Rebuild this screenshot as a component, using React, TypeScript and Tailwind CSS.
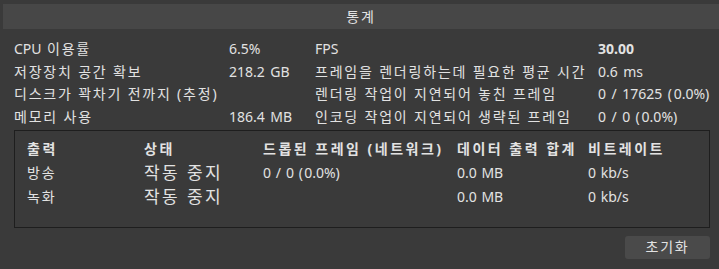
import React from 'react';

const font = { fontFamily: '"Noto Sans", "Noto Sans CJK KR", sans-serif' };

// 한글 구간만 자간을 넓혀 원본 폰트 폭에 맞춤
const Kr: React.FC<{ text: string; track: string }> = ({ text, track }) => (
  <span className="whitespace-pre">
    {text.split(/([가-힣() ]+)/).map((part, i) =>
      /[가-힣() ]/.test(part) ? (
        <span key={i} className={track}>
          {part}
        </span>
      ) : (
        <React.Fragment key={i}>{part}</React.Fragment>
      ),
    )}
  </span>
);

const stats: [string, string, string, string][] = [
  ['CPU 이용률', '6.5%', 'FPS', '30.00'],
  ['저장장치 공간 확보', '218.2 GB', '프레임을 렌더링하는데 필요한 평균 시간', '0.6 ms'],
  ['디스크가 꽉차기 전까지 (추정)', '', '렌더링 작업이 지연되어 놓친 프레임', '0 / 17625 (0.0%)'],
  ['메모리 사용', '186.4 MB', '인코딩 작업이 지연되어 생략된 프레임', '0 / 0 (0.0%)'],
];

const outputs = [
  { name: '방송', status: '작동 중지', dropped: '0 / 0 (0.0%)', total: '0.0 MB', bitrate: '0 kb/s' },
  { name: '녹화', status: '작동 중지', dropped: '', total: '0.0 MB', bitrate: '0 kb/s' },
];

const headers = ['출력', '상태', '드롭된 프레임 (네트워크)', '데이터 출력 합계', '비트레이트'];

const App: React.FC = () => {
  return (
    <div className="w-[719px] h-[269px] bg-[#3a3a3a] text-[#e2e2e2] overflow-hidden pt-[4px]" style={font}>
      {/* 제목 */}
      <div className="ml-[3px] h-[25px] bg-[#474747] flex items-center justify-center text-[14px] leading-none">
        <Kr text="통계" track="tracking-[1.8px]" />
      </div>

      <div className="pl-[14px] pt-[8px] grid grid-cols-[215px_86px_283px_1fr] text-[14px]">
        {stats.map((r, i) => (
          <React.Fragment key={i}>
            {r.map((c, j) => (
              <div
                key={j}
                className={`h-[22.7px] flex items-center whitespace-nowrap ${i === 0 && j === 3 ? 'font-bold' : ''}`}
              >
                <Kr text={c} track="tracking-[1.8px]" />
              </div>
            ))}
          </React.Fragment>
        ))}
      </div>

      <div className="ml-[14px] mt-[2px] w-[696px] h-[98px] border border-[#1e1e1e] pl-[12px] pt-[6px] text-[14px]">
        <div className="grid grid-cols-[117px_119px_194px_131px_1fr]">
          {headers.map((h) => (
            <div key={h} className="h-[24px] flex items-center font-bold whitespace-nowrap">
              <Kr text={h} track="tracking-[2.5px]" />
            </div>
          ))}
          {outputs.map((o) => (
            <React.Fragment key={o.name}>
              <div className="h-[24px] flex items-center">
                <Kr text={o.name} track="tracking-[1.8px]" />
              </div>
              <div className="h-[24px] flex items-center text-[17px] whitespace-nowrap">
                <Kr text={o.status} track="tracking-[2.4px]" />
              </div>
              <div className="h-[24px] flex items-center whitespace-nowrap">
                <Kr text={o.dropped} track="tracking-[1.2px]" />
              </div>
              <div className="h-[24px] flex items-center">
                <Kr text={o.total} track="tracking-[1px]" />
              </div>
              <div className="h-[24px] flex items-center">
                <Kr text={o.bitrate} track="tracking-[1px]" />
              </div>
            </React.Fragment>
          ))}
        </div>
      </div>

      <div className="flex justify-end pr-[9px] pt-[8px]">
        <button
          type="button"
          className="w-[85px] h-[23px] rounded-[3px] bg-[#4a4a4a] text-[14px] leading-none flex items-center justify-center"
        >
          <Kr text="초기화" track="tracking-[1.8px]" />
        </button>
      </div>
    </div>
  );
};

export default App;
